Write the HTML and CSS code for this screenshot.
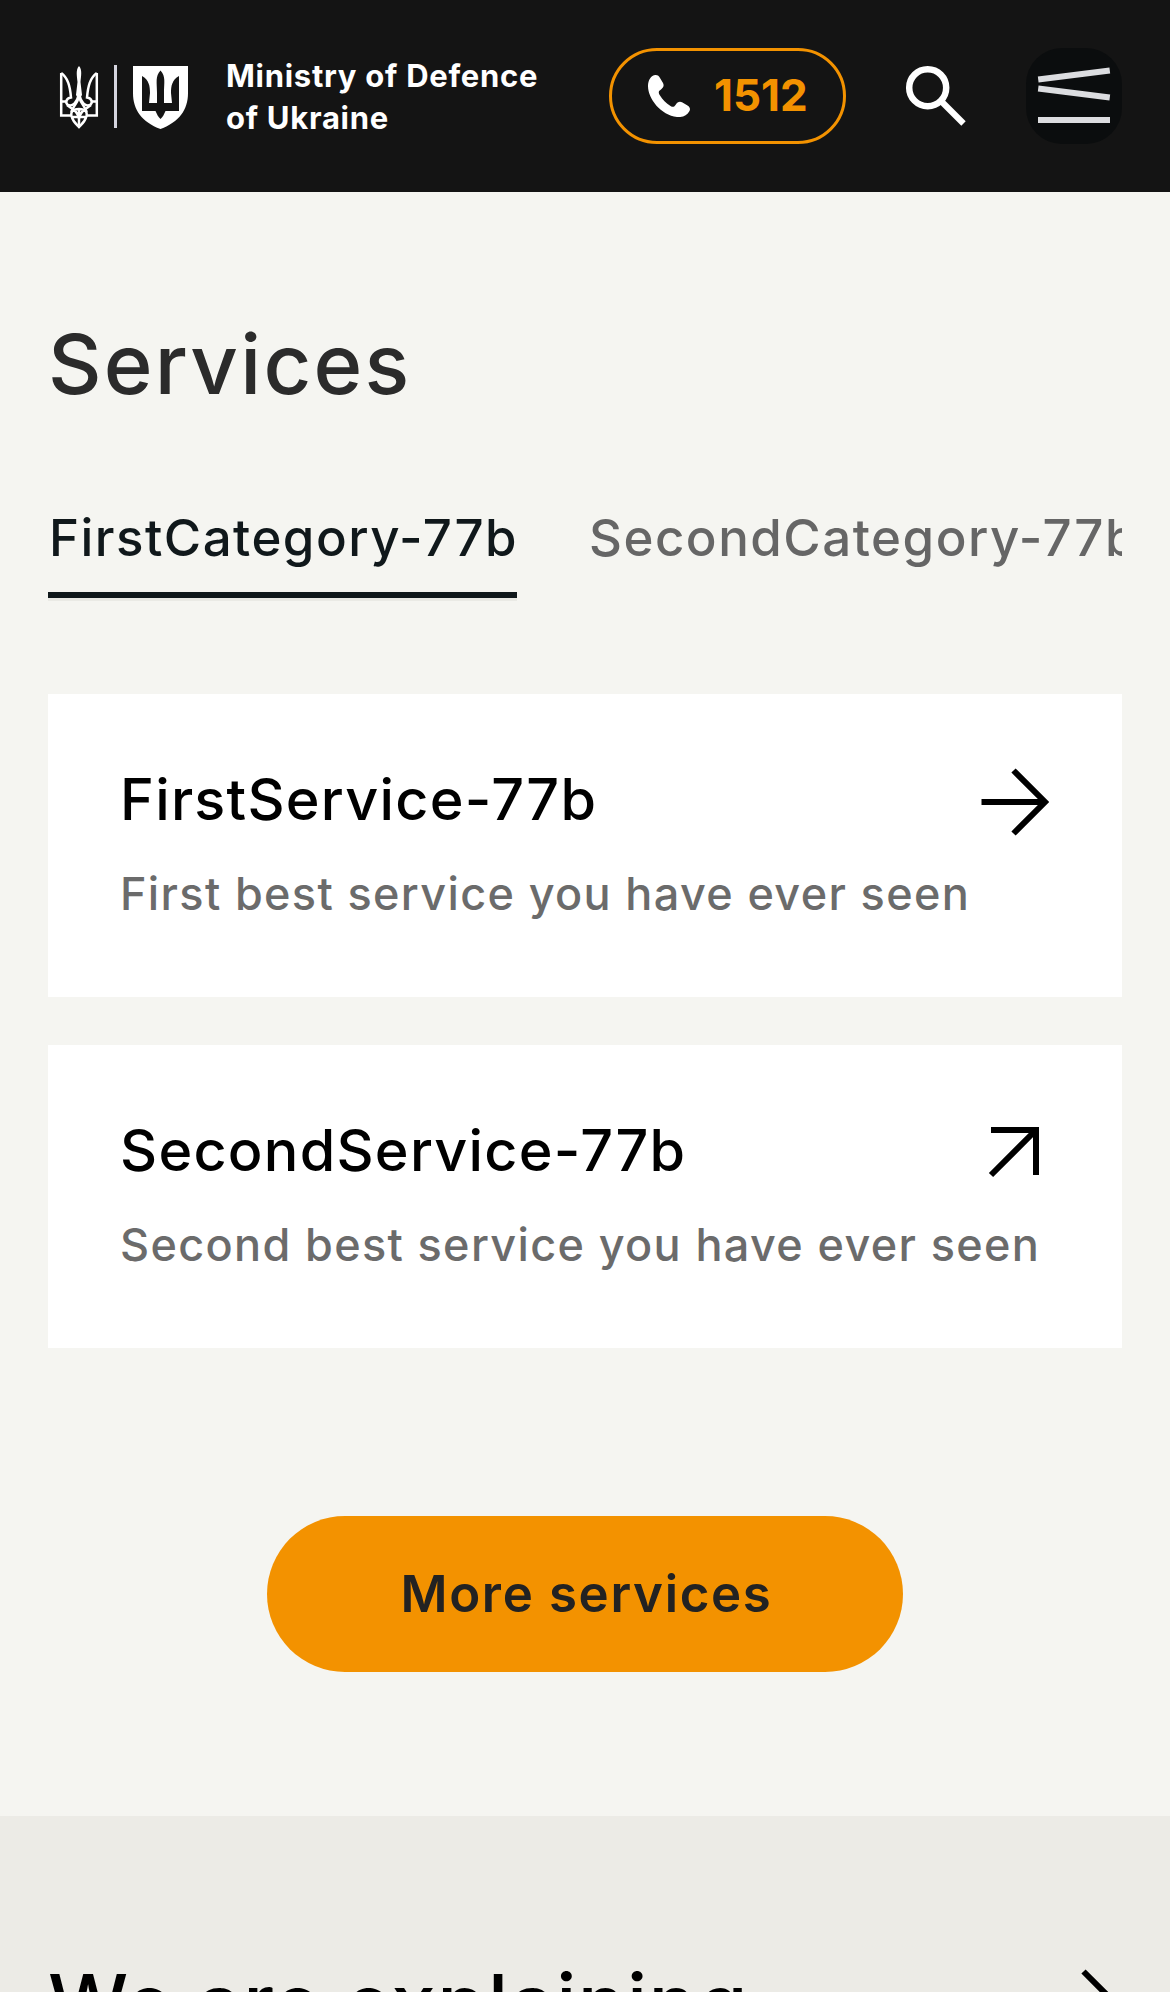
FILE: index.html
```
<!DOCTYPE html>
<html lang="en">
<head>
<meta charset="utf-8">
<title>Ministry of Defence of Ukraine</title>
<link rel="stylesheet" href="styles.css">
</head>
<body>
<header class="header">
  <a class="brand">
    <svg class="brand-logo" viewBox="0 0 130 66" aria-hidden="true">
      <g fill="none" stroke="#fff" stroke-width="2.500">
        <path d="M2.200 7V49.500H13M37.800 7V49.500H27"/>
        <path d="M2.200 7C9 12 11 20 12 31.500C7 32 6 37 9 39C14 41 18 36 20 28C22 36 26 41 31 39C34 37 33 32 28 31.500C29 20 31 12 37.800 7"/>
        <path d="M2 35.500H8M32 35.500H38"/>
        <path d="M20 31C17 41 11 42 12.500 50C14 56 17 58 20 61C23 58 26 56 27.500 50C29 42 23 41 20 31Z"/>
        <path d="M8 39C13 43 19 45 20 53C21 45 27 43 32 39M12 46C16 42 24 42 28 46M20 44V60M13 51H27"/>
      </g>
      <path fill="#fff" d="M20 0C16.500 4 18 10 18.500 16L17 29L20 34L23 29L21.500 16C22 10 23.500 4 20 0Z"/>
      <path fill="#d5d5df" d="M55 -1H58V62H55Z"/>
      <path fill="#fff" fill-rule="evenodd" d="M74 0H129V27C129 44 120 56 101.500 63C83 56 74 44 74 27ZM83 10V45H96.500C98 48 99 51 101.500 53C104 51 105 48 106.500 45H120V10C113 14 112 20 112 27L113 37H105V27C105 17 107 10 101.500 4.500C96 10 98 17 98 27V37H90L91 27C91 20 90 14 83 10Z"/>
    </svg>
    <span class="brand-name">Ministry of Defence<br>of Ukraine</span>
  </a>
  <div class="actions">
    <a class="hotline">
      <svg class="hotline-icon" viewBox="0 0 42 42" aria-hidden="true"><path fill="#fff" d="M7.500 0C10 0 11 1 12 3L15 8C16.500 11 15 13 13 14.500C10.500 16 10 17.500 12 20.500C14.500 24.500 18 28 22.500 31C25 32.500 26 32 27.500 30C29.500 27 31.500 26 34.500 27.500L39.500 30.500C42 32 42.500 34 41.500 36C39 40.500 34.500 42.500 29 42C13 40 0 24 0 11C0 5.500 3 0 7.500 0Z"/></svg>
      <span class="hotline-number">1512</span>
    </a>
    <button class="icon-button" aria-label="Search">
      <svg class="icon-96" viewBox="0 0 96 96" fill="none" stroke="#fff"><circle cx="39.700" cy="39.700" r="18.500" stroke-width="6.500"/><path stroke-width="6.200" d="M52.500 52.500L75.500 75.500"/></svg>
    </button>
    <button class="icon-button menu-button" aria-label="Menu">
      <svg class="icon-96" viewBox="0 0 96 96" stroke="#dcdde0" stroke-width="6"><path d="M12.200 31.500L83.800 22.500M12.200 40.500L83.800 49.500M12 72H84"/></svg>
    </button>
  </div>
</header>
<main>
  <section class="services">
    <h1 class="heading services-heading">Services</h1>
    <nav class="tabs">
      <a class="tab tab-active">FirstCategory-77b</a>
      <a class="tab">SecondCategory-77b</a>
    </nav>
    <div class="cards">
      <a class="card">
        <div class="card-head">
          <h2 class="card-title">FirstService-77b</h2>
          <svg class="arrow" viewBox="0 0 72 72"><path d="M3.500 38H66M35.500 6.500L67 38L35.500 69.500"/></svg>
        </div>
        <p class="card-text">First best service you have ever seen</p>
      </a>
      <a class="card">
        <div class="card-head">
          <h2 class="card-title">SecondService-77b</h2>
          <svg class="arrow" viewBox="0 0 72 72"><path d="M13 15H58V60M13 60L58 15"/></svg>
        </div>
        <p class="card-text">Second best service you have ever seen</p>
      </a>
    </div>
    <a class="more">More services</a>
  </section>
  <section class="explaining">
    <h2 class="heading explaining-heading">We are explaining</h2>
    <svg class="arrow" viewBox="0 0 72 72"><path d="M3.500 38H66M35.500 6.500L67 38L35.500 69.500"/></svg>
  </section>
</main>
</body>
</html>
```
FILE: styles.css
```
* { box-sizing: border-box; }

body {
  margin: 0;
  height: 1992px;
  overflow: hidden;
  background: #f5f5f1;
  color: #000;
  font-family: Inter, "Liberation Sans", sans-serif;
  font-weight: 500;
}

h1, h2, p { margin: 0; }
svg { display: block; flex: none; }

/* Header */
.header {
  display: flex;
  align-items: center;
  justify-content: space-between;
  height: 192px;
  padding: 0 48px 0 59px;
  background: #141414;
}
.brand { display: flex; align-items: center; gap: 37px; padding-top: 6px; }
.brand-logo { width: 130px; height: 66px; overflow: visible; }
.brand-name {
  padding-bottom: 4px;
  color: #fff;
  font-size: 31px;
  font-weight: 650;
  line-height: 42px;
  letter-spacing: .72px;
  white-space: nowrap;
}
.actions { display: flex; align-items: center; }
.hotline {
  display: flex;
  align-items: center;
  width: 237px;
  height: 96px;
  margin-right: 42px;
  padding-left: 36px;
  border: 3px solid #f39200;
  border-radius: 48px;
}
.hotline-icon { width: 42px; height: 42px; }
.hotline-number {
  margin-left: 24px;
  padding-bottom: 2px;
  color: #f39200;
  font-size: 44px;
  font-weight: 700;
  line-height: 60px;
}
.icon-button {
  width: 96px;
  height: 96px;
  padding: 0;
  border: 0;
  background: none;
}
.menu-button {
  margin-left: 42px;
  border-radius: 36px;
  background: #0b0d0e;
}
.icon-96 { width: 96px; height: 96px; }

/* Services */
.services {
  display: flex;
  flex-direction: column;
  height: 1624px;
  padding: 124px 48px 0;
}
.heading { font-weight: 500; line-height: 96px; white-space: nowrap; }
.services-heading { color: #2b2b2b; font-size: 83px; letter-spacing: 2.2px; }
.tabs {
  display: flex;
  gap: 72px;
  margin-top: 93px;
  overflow: hidden;
}
.tab {
  flex: none;
  height: 96px;
  color: #666;
  font-size: 51px;
  line-height: 66px;
  letter-spacing: 1.5px;
  white-space: nowrap;
}
.tab-active {
  width: 469px;
  padding-left: 1px;
  border-bottom: 3px solid #eaeae5;
  box-shadow: inset 0 -6px #10181b;
  color: #10181b;
  letter-spacing: 1.47px;
}
.cards { display: grid; gap: 48px; margin-top: 93px; }
.card { height: 303px; padding: 70px 72px 0; background: #fff; }
.card-head { display: flex; justify-content: space-between; }
.card-title {
  font-size: 57.5px;
  font-weight: 500;
  line-height: 70px;
  letter-spacing: 1.25px;
}
.arrow {
  width: 72px;
  height: 72px;
  fill: none;
  stroke: #000;
  stroke-width: 6;
}
.card-text {
  margin-top: 28px;
  color: #6b6b6b;
  font-size: 45px;
  line-height: 60px;
  letter-spacing: 1.35px;
  white-space: nowrap;
}
.more {
  align-self: center;
  width: 636px;
  height: 156px;
  margin-top: 168px;
  border-radius: 78px;
  background: #f39200;
  color: #222;
  font-size: 51px;
  font-weight: 600;
  line-height: 156px;
  letter-spacing: 1.65px;
  text-align: center;
  text-indent: 3px;
}

/* Explaining */
.explaining {
  display: flex;
  justify-content: space-between;
  height: 260px;
  padding: 139px 48px 0;
  background: #ecebe6;
}
.explaining-heading { font-size: 80px; letter-spacing: 1.3px; }
.explaining .arrow { margin: 10px 2px 0 0; }
```
